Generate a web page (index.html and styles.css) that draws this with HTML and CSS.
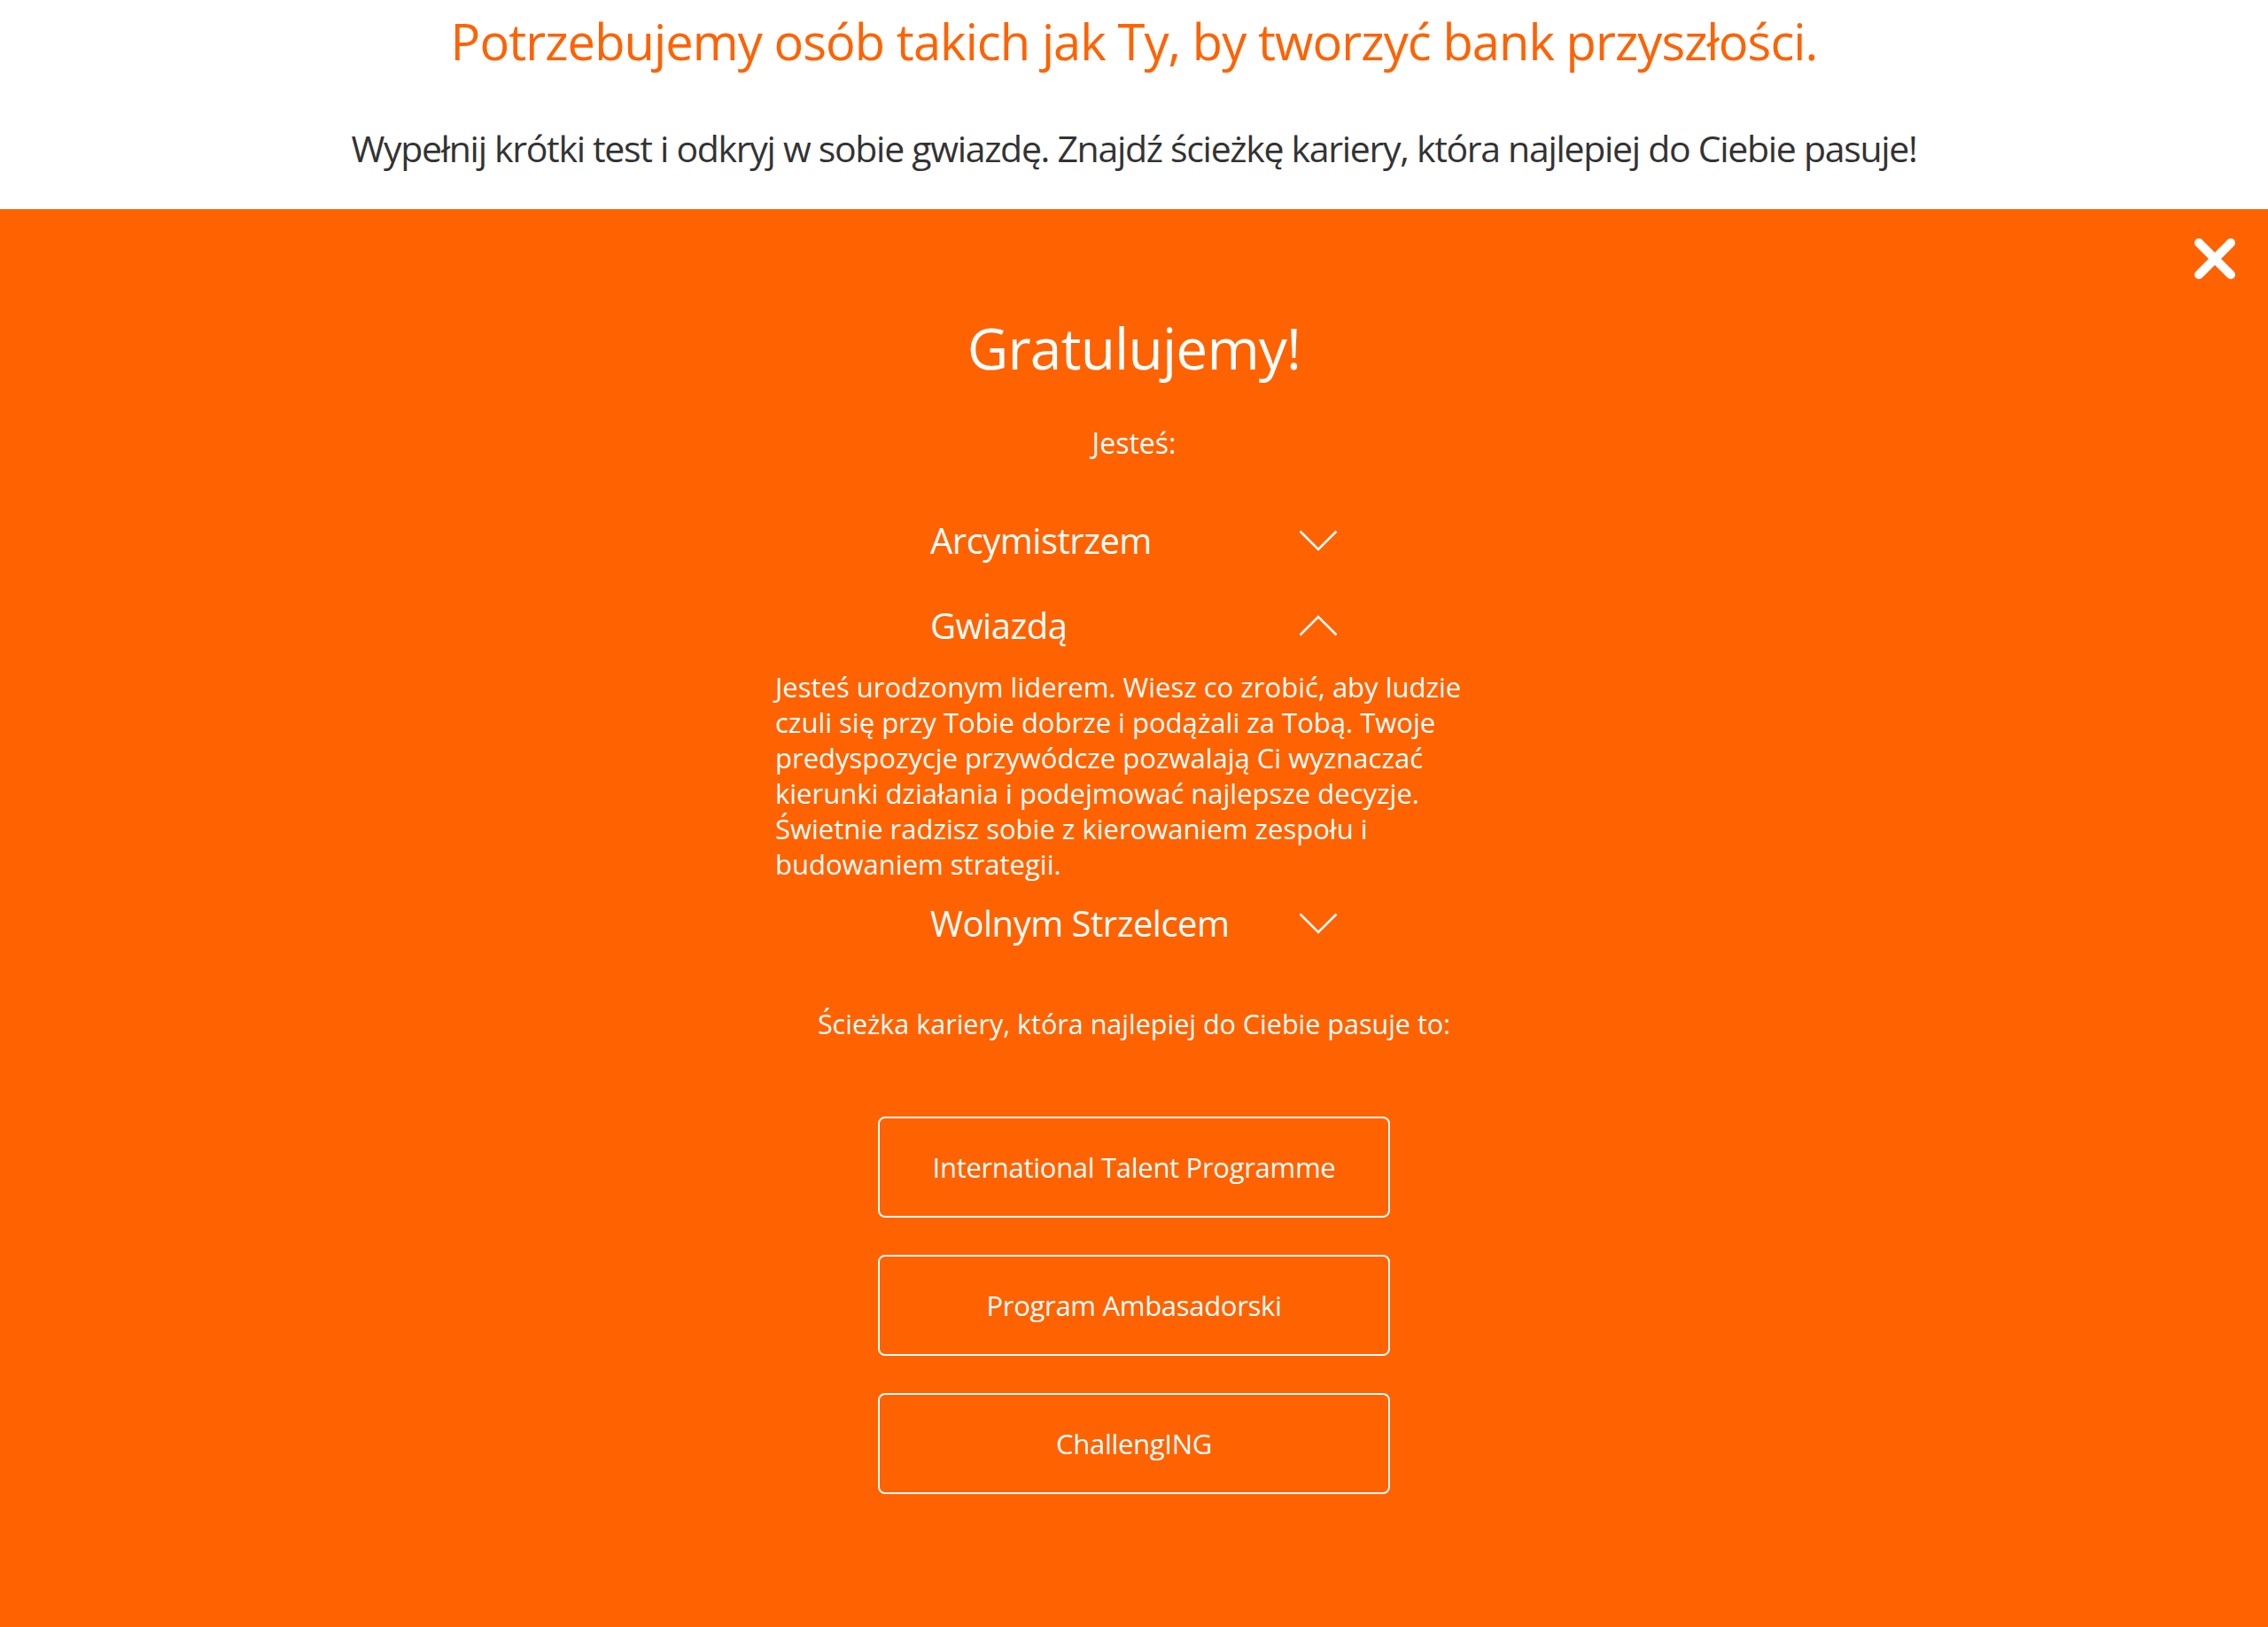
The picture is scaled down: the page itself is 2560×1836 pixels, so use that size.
FILE: index.html
```html
<!DOCTYPE html>
<html lang="pl">
<head>
<meta charset="utf-8">
<title>Gratulujemy!</title>
<link rel="stylesheet" href="styles.css">
</head>
<body>
<header class="intro">
  <h1 class="intro-title">Potrzebujemy osób takich jak Ty, by tworzyć bank przyszłości.</h1>
  <p class="intro-sub">Wypełnij krótki test i odkryj w sobie gwiazdę. Znajdź ścieżkę kariery, która najlepiej do Ciebie pasuje!</p>
</header>
<main class="result">
  <button class="close" aria-label="Zamknij">
    <svg width="48" height="48" viewBox="0 0 48 48"><path d="M6 6 L42 42 M42 6 L6 42" stroke="#fff" stroke-width="10" stroke-linecap="round" fill="none"/></svg>
  </button>
  <h2 class="result-title">Gratulujemy!</h2>
  <p class="result-lead">Jesteś:</p>
  <div class="accordion">
    <div class="acc-item">
      <div class="acc-head"><span>Arcymistrzem</span>
        <svg class="chev" width="44" height="24" viewBox="0 0 44 24"><polyline points="1.5,1.5 22,22 42.5,1.5" fill="none" stroke="#fff" stroke-width="2.6"/></svg>
      </div>
    </div>
    <div class="acc-item open">
      <div class="acc-head"><span>Gwiazdą</span>
        <svg class="chev" width="44" height="24" viewBox="0 0 44 24"><polyline points="1.5,22.5 22,2 42.5,22.5" fill="none" stroke="#fff" stroke-width="2.6"/></svg>
      </div>
      <p class="acc-body">Jesteś urodzonym liderem. Wiesz co zrobić, aby ludzie czuli się przy Tobie dobrze i podążali za Tobą. Twoje predyspozycje przywódcze pozwalają Ci wyznaczać kierunki działania i podejmować najlepsze decyzje. Świetnie radzisz sobie z kierowaniem zespołu i budowaniem strategii.</p>
    </div>
    <div class="acc-item">
      <div class="acc-head"><span>Wolnym Strzelcem</span>
        <svg class="chev" width="44" height="24" viewBox="0 0 44 24"><polyline points="1.5,1.5 22,22 42.5,1.5" fill="none" stroke="#fff" stroke-width="2.6"/></svg>
      </div>
    </div>
  </div>
  <p class="result-path">Ścieżka kariery, która najlepiej do Ciebie pasuje to:</p>
  <div class="programs">
    <a class="program">International Talent Programme</a>
    <a class="program">Program Ambasadorski</a>
    <a class="program">ChallengING</a>
  </div>
</main>
</body>
</html>
```
FILE: styles.css
```css
html, body {
  margin: 0;
  padding: 0;
}
body {
  font-family: "Open Sans", "Noto Sans", sans-serif;
  background: #fff;
  width: 2560px;
  min-height: 1836px;
  display: flex;
  flex-direction: column;
}
.intro {
  text-align: center;
  padding: 6px 0 39px;
}
.intro-title {
  margin: 0;
  font-size: 56px;
  line-height: 80px;
  font-weight: 400;
  letter-spacing: -0.9px;
  color: #ff6200;
}
.intro-sub {
  margin: 51px 0 0;
  font-size: 41px;
  line-height: 60px;
  letter-spacing: -1.3px;
  color: #333333;
}
.result {
  position: relative;
  flex: 1;
  background: #ff6200;
  color: #fff;
  display: flex;
  flex-direction: column;
  align-items: center;
  padding-top: 117px;
}
.close {
  position: absolute;
  top: 32px;
  right: 36px;
  width: 48px;
  height: 48px;
  padding: 0;
  border: 0;
  background: none;
  display: block;
}
.close svg { display: block; }
.result-title {
  margin: 0;
  font-size: 64px;
  line-height: 80px;
  font-weight: 400;
  letter-spacing: -0.8px;
}
.result-lead {
  margin: 47px 0 0;
  font-size: 32px;
  line-height: 40px;
}
.accordion {
  margin-top: 62px;
  display: flex;
  flex-direction: column;
  align-items: center;
}
.acc-item {
  display: flex;
  flex-direction: column;
  align-items: center;
  padding-bottom: 19px;
}
.acc-head {
  width: 460px;
  height: 56px;
  display: flex;
  align-items: center;
  justify-content: space-between;
  font-size: 40px;
  line-height: 56px;
  letter-spacing: -0.5px;
  margin-bottom: 21px;
}
.acc-item.open .acc-head { margin-bottom: 21px; }
.chev { display: block; }
.acc-body {
  margin: 0;
  width: 810px;
  box-sizing: border-box;
  font-size: 31px;
  line-height: 40px;
  text-align: left;
}
.result-path {
  margin: 25px 0 0;
  font-size: 30.5px;
  line-height: 40px;
}
.programs {
  margin-top: 85px;
  display: flex;
  flex-direction: column;
  gap: 42px;
}
.program {
  width: 578px;
  height: 114px;
  box-sizing: border-box;
  border: 2px solid #fff;
  border-radius: 8px;
  display: flex;
  align-items: center;
  justify-content: center;
  font-size: 31px;
  line-height: 40px;
  letter-spacing: -0.3px;
  color: #fff;
}
```
